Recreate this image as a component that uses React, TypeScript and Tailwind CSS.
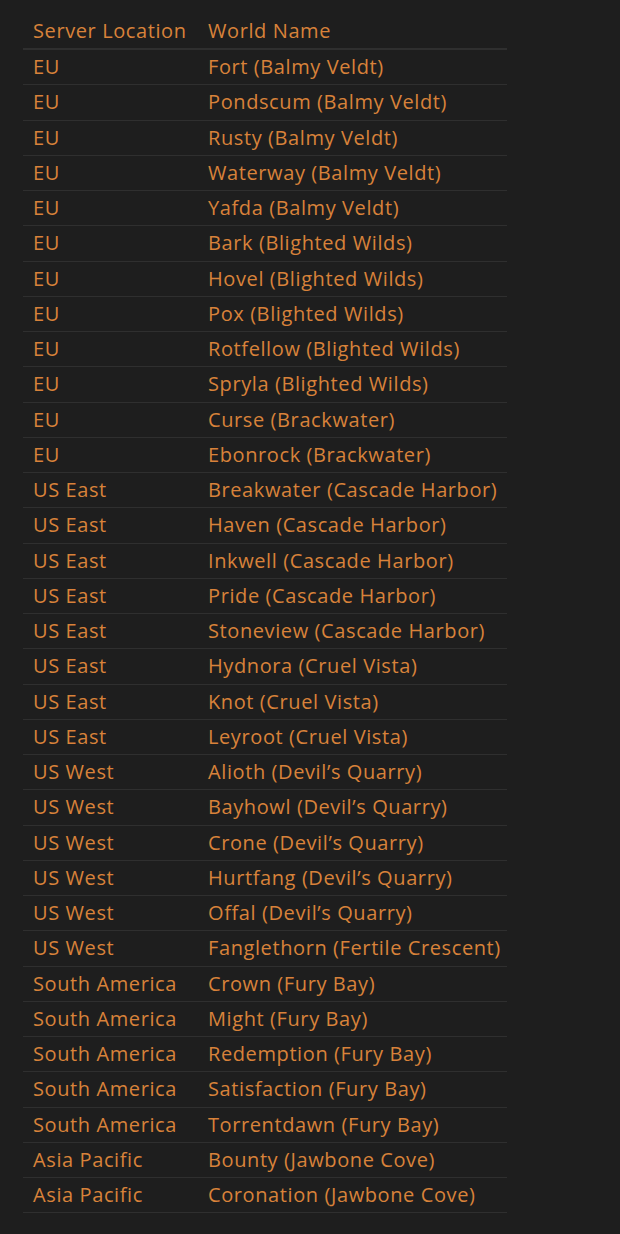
const rows: [string, string][] = [
  ["EU", "Fort (Balmy Veldt)"],
  ["EU", "Pondscum (Balmy Veldt)"],
  ["EU", "Rusty (Balmy Veldt)"],
  ["EU", "Waterway (Balmy Veldt)"],
  ["EU", "Yafda (Balmy Veldt)"],
  ["EU", "Bark (Blighted Wilds)"],
  ["EU", "Hovel (Blighted Wilds)"],
  ["EU", "Pox (Blighted Wilds)"],
  ["EU", "Rotfellow (Blighted Wilds)"],
  ["EU", "Spryla (Blighted Wilds)"],
  ["EU", "Curse (Brackwater)"],
  ["EU", "Ebonrock (Brackwater)"],
  ["US East", "Breakwater (Cascade Harbor)"],
  ["US East", "Haven (Cascade Harbor)"],
  ["US East", "Inkwell (Cascade Harbor)"],
  ["US East", "Pride (Cascade Harbor)"],
  ["US East", "Stoneview (Cascade Harbor)"],
  ["US East", "Hydnora (Cruel Vista)"],
  ["US East", "Knot (Cruel Vista)"],
  ["US East", "Leyroot (Cruel Vista)"],
  ["US West", "Alioth (Devil’s Quarry)"],
  ["US West", "Bayhowl (Devil’s Quarry)"],
  ["US West", "Crone (Devil’s Quarry)"],
  ["US West", "Hurtfang (Devil’s Quarry)"],
  ["US West", "Offal (Devil’s Quarry)"],
  ["US West", "Fanglethorn (Fertile Crescent)"],
  ["South America", "Crown (Fury Bay)"],
  ["South America", "Might (Fury Bay)"],
  ["South America", "Redemption (Fury Bay)"],
  ["South America", "Satisfaction (Fury Bay)"],
  ["South America", "Torrentdawn (Fury Bay)"],
  ["Asia Pacific", "Bounty (Jawbone Cove)"],
  ["Asia Pacific", "Coronation (Jawbone Cove)"],
]

export default function App() {
  return (
    <div className="min-h-[1234px] w-[620px] bg-[#1e1e1e] pl-[23px] pt-[13px] font-['Open_Sans',sans-serif] text-[20px] font-medium tracking-[0.6px] text-[#d8823a]">
      <table className="w-[484px] border-collapse">
        <thead>
          <tr className="border-b-2 border-[#2f2f2f]">
            <th className="w-[185px] px-[10px] py-[5px] text-left font-medium leading-[25px]">Server Location</th>
            <th className="px-0 py-[5px] text-left font-medium leading-[25px]">World Name</th>
          </tr>
        </thead>
        <tbody>
          {rows.map(([loc, name], i) => (
            <tr key={i} className="border-b border-[#2f2f2f]">
              <td className="px-[10px] py-[5px] leading-[24.25px]">{loc}</td>
              <td className="px-0 py-[5px] leading-[24.25px]">{name}</td>
            </tr>
          ))}
        </tbody>
      </table>
    </div>
  )
}
